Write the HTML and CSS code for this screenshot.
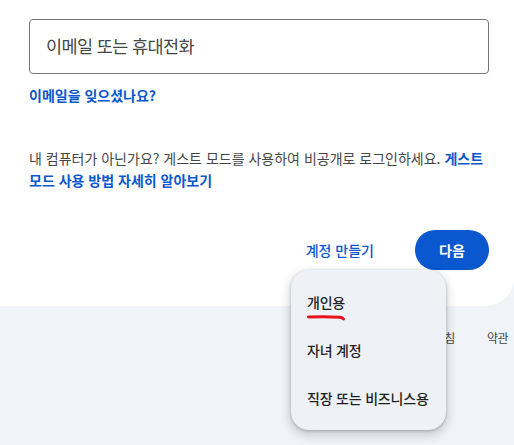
FILE: index.html
```html
<!DOCTYPE html>
<html lang="ko">
<head>
<meta charset="utf-8">
<link rel="stylesheet" href="styles.css">
</head>
<body>
<div class="page">
  <main class="card">
    <div class="field"><span class="placeholder">이메일 또는 휴대전화</span></div>
    <a class="link forgot">이메일을 잊으셨나요?</a>
    <p class="note">내 컴퓨터가 아닌가요? 게스트 모드를 사용하여 비공개로 로그인하세요. <a class="link">게스트 모드 사용 방법 자세히 알아보기</a></p>
    <div class="actions">
      <a class="link create">계정 만들기</a>
      <button class="next">다음</button>
    </div>
  </main>
  <footer class="footer">
    <span class="foot-item">개인정보처리방침</span>
    <span class="foot-item">약관</span>
  </footer>
  <div class="menu">
    <div class="menu-item">개인용</div>
    <div class="menu-item">자녀 계정</div>
    <div class="menu-item">직장 또는 비즈니스용</div>
    <svg class="scribble" width="40" height="8" viewBox="0 0 40 8"><path d="M1.5 3 Q18 2.2 33 3.2 Q35.5 3.6 36.5 5" fill="none" stroke="#e8141c" stroke-width="3" stroke-linecap="round"/></svg>
  </div>
</div>
</body>
</html>
```
FILE: styles.css
```css
html, body {
  margin: 0;
  padding: 0;
}
body {
  background: #f0f4f9;
  font-family: "Noto Sans CJK KR", "Noto Sans", sans-serif;
  letter-spacing: 0;
  color: #444746;
  overflow: hidden;
}
.page {
  position: relative;
  width: 514px;
  height: 445px;
}
.card {
  background: #ffffff;
  margin-left: -40px;
  width: 554px;
  box-sizing: border-box;
  height: 306px;
  padding: 19px 25px 0 69px;
  border-radius: 0 0 28px 28px;
  display: flex;
  flex-direction: column;
}
.field {
  height: 55px;
  box-sizing: border-box;
  border: 1px solid #747775;
  border-radius: 4px;
  display: flex;
  align-items: center;
  padding: 0 16px 2px;
}
.placeholder {
  font-size: 17.5px;
  letter-spacing: -0.6px;
  color: #444746;
}
.link {
  color: #0b57d0;
  font-weight: 700;
  text-decoration: none;
}
.forgot {
  margin-top: 11px;
  font-size: 14px;
  line-height: 20px;
}
.note {
  margin: 42px 0 0;
  font-size: 14px;
  line-height: 22px;
  color: #444746;
}
.actions {
  margin-top: 39px;
  display: flex;
  justify-content: flex-end;
  align-items: center;
  gap: 41px;
}
.create {
  font-size: 14px;
  font-weight: 500;
}
.next {
  width: 74px;
  height: 40px;
  border: none;
  border-radius: 20px;
  background: #0b57d0;
  color: #ffffff;
  font-family: inherit;
  font-size: 14px;
  font-weight: 700;
  padding: 0;
}
.footer {
  display: flex;
  justify-content: flex-end;
  gap: 32px;
  padding: 24px 6px 0 0;
  font-size: 12px;
  letter-spacing: -0.5px;
  line-height: 16px;
  color: #444746;
}
.menu {
  position: absolute;
  left: 291px;
  top: 270px;
  width: 155px;
  box-sizing: border-box;
  padding: 8px 0;
  background: #eef2f7;
  border-radius: 18px;
  box-shadow: 0 4px 8px 3px rgba(0, 0, 0, 0.13), 0 1px 3px rgba(0, 0, 0, 0.25);
}
.menu-item {
  height: 48px;
  display: flex;
  align-items: center;
  padding-left: 16px;
  font-size: 14px;
  font-weight: 500;
  letter-spacing: -0.2px;
  color: #1f1f1f;
  white-space: nowrap;
}
.scribble {
  position: absolute;
  left: 16px;
  top: 44px;
}
```
